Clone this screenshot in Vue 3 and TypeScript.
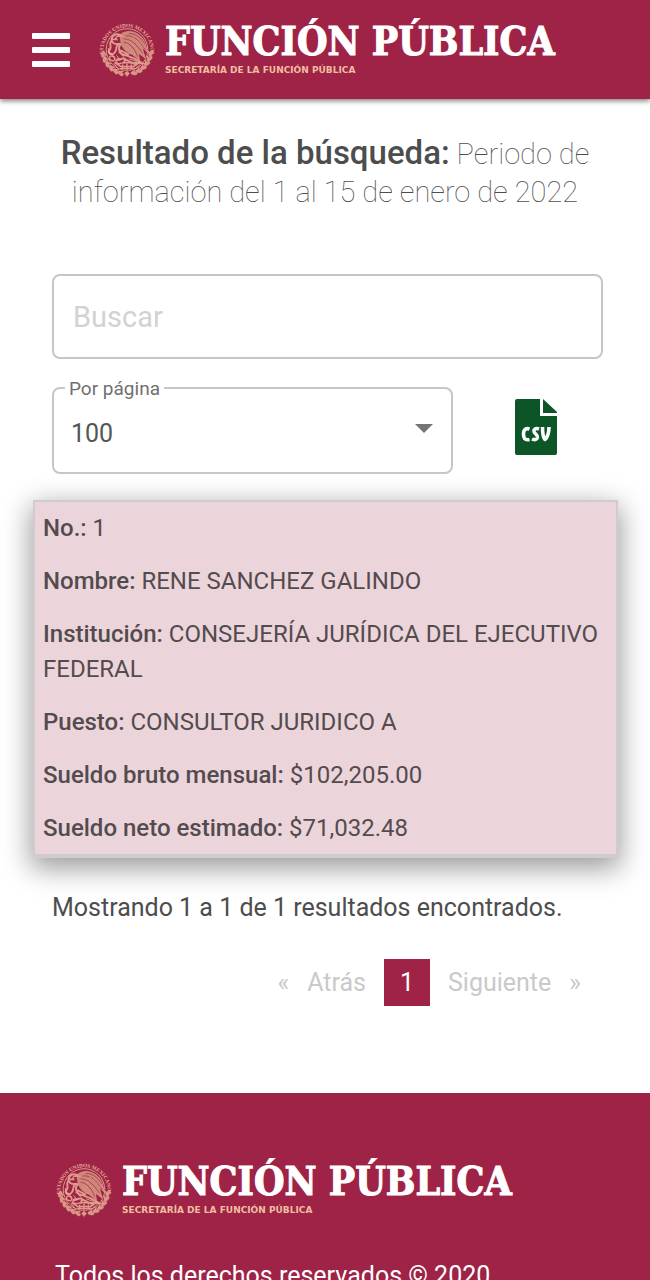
<script setup lang="ts">
import { computed, defineComponent, h, ref } from 'vue'

interface Field {
  label: string
  value: string
}

const query = ref('')
const perPage = ref(100)
const pageSizes: number[] = [10, 25, 50, 100]

const record: Field[] = [
  { label: 'No.:', value: '1' },
  { label: 'Nombre:', value: 'RENE SANCHEZ GALINDO' },
  { label: 'Institución:', value: 'CONSEJERÍA JURÍDICA DEL EJECUTIVO FEDERAL' },
  { label: 'Puesto:', value: 'CONSULTOR JURIDICO A' },
  { label: 'Sueldo bruto mensual:', value: '$102,205.00' },
  { label: 'Sueldo neto estimado:', value: '$71,032.48' },
]

const records = ref<Field[][]>([record])
const summary = computed(
  () => `Mostrando 1 a ${records.value.length} de ${records.value.length} resultados encontrados.`,
)

// Laurel leaves along the lower half of the seal, in degrees from the right.
const leaves: number[] = [9, 22, 35, 48, 61, 74, 106, 119, 132, 145, 158, 171]

const Seal = defineComponent({
  props: { id: { type: String, required: true } },
  setup(props) {
    return () =>
      h('svg', { viewBox: '0 0 120 120', width: 58, height: 58, fill: 'none', stroke: '#dd9c8b', 'aria-hidden': 'true' }, [
        h('path', { id: props.id, d: 'M12 72 A49 49 0 1 1 108 72', stroke: 'none' }),
        h('text', { fill: '#e6ad98', stroke: 'none', 'font-size': 11, 'font-weight': 700, 'font-family': 'Liberation Serif, serif' }, [
          h('textPath', { href: `#${props.id}`, startOffset: '50%', 'text-anchor': 'middle' }, 'ESTADOS UNIDOS MEXICANOS'),
        ]),
        h('circle', { cx: 60, cy: 59, r: 43, 'stroke-width': 2 }),
        ...leaves.map((a) =>
          h('g', { transform: `rotate(${a} 60 60) translate(112 60)` }, [
            h('ellipse', { cx: -2, cy: 0, rx: 3.5, ry: 6.5, fill: '#d99483', 'stroke-width': 1, transform: 'rotate(25)' }),
            h('path', { d: 'M-8 -5 L-3 4', 'stroke-width': 3 }),
          ]),
        ),
        h('path', { d: 'M55 108 l5 7 5 -7 -5 -4z', fill: '#dd9c8b' }),
        // wing
        h('path', {
          d: 'M45 29 C61 15 88 22 98 46 L102 64 L91 55 L98 77 L83 66 L86 82 L71 69 C60 66 51 57 48 46z',
          fill: '#cf8578', 'stroke-width': 1.5,
        }),
        h('path', {
          d: 'M57 31 C73 29 85 39 98 60 M53 37 C69 37 80 49 92 67 M53 44 C66 45 77 58 82 75 M64 26 C80 25 89 37 98 48',
          stroke: '#9f2346', 'stroke-width': 1.4,
        }),
        h('path', {
          d: 'M61 39 L96 72 M60 48 L85 78 M70 31 L99 58 M59 55 L74 72',
          stroke: '#f1c5ae', 'stroke-width': 1, 'stroke-dasharray': '2 2',
        }),
        // head, beak and serpent
        h('path', {
          d: 'M46 47 C33 50 27 43 28 37 C30 28 41 24 48 31 C40 30 36 34 38 38 L29 38 M29 39 C20 48 31 54 23 61 C19 66 28 72 34 66 C42 58 34 53 42 49',
          'stroke-width': 4,
        }),
        h('circle', { cx: 40, cy: 34, r: 1.5, fill: '#9f2346', stroke: 'none' }),
        // breast, claws and tail
        h('path', {
          d: 'M48 47 C39 56 44 68 55 70 L73 77 L91 87 L72 87 L52 77 L38 82 M56 76 L54 88 M46 60 L64 70 M43 63 L54 73',
          'stroke-width': 4,
        }),
        // nopal, stone and lake
        h('path', {
          d: 'M30 73 C23 70 21 80 29 82 C36 83 37 75 30 73 M43 78 C35 78 35 89 44 88 M39 91 C50 84 70 84 80 92 M34 86 L47 94 L74 94 L88 84 M45 98 H76 M51 90 V98 M60 88 V101 M69 90 V98',
          'stroke-width': 3,
        }),
        h('path', {
          d: 'M26 65 L34 75 M21 56 L25 70 M38 71 L47 81 M64 78 L80 84 M33 88 L41 98 M77 99 L86 91',
          stroke: '#f1c5ae', 'stroke-width': 1.5,
        }),
      ])
  },
})
</script>

<template>
  <div class="page">
    <header class="topbar">
      <button class="menu" type="button" aria-label="Menú">
        <svg viewBox="0 0 38 34" width="38" height="34" fill="#fff" aria-hidden="true">
          <rect width="38" height="6" rx="1" />
          <rect y="14" width="38" height="6" rx="1" />
          <rect y="28" width="38" height="6" rx="1" />
        </svg>
      </button>
      <a class="brand" href="#">
        <Seal id="seal-top" />
        <span class="wordmark">
          <span class="name">FUNCIÓN PÚBLICA</span>
          <span class="sub">SECRETARÍA DE LA FUNCIÓN PÚBLICA</span>
        </span>
      </a>
    </header>

    <main class="content">
      <h1 class="title"><strong>Resultado de la búsqueda:</strong> Periodo de información del 1 al 15 de enero de 2022</h1>

      <div class="filters">
        <input v-model="query" class="search" type="text" placeholder="Buscar" aria-label="Buscar" />
        <div class="row">
          <div class="per-page">
            <label for="per-page">Por página</label>
            <select id="per-page" v-model="perPage">
              <option v-for="n in pageSizes" :key="n" :value="n">{{ n }}</option>
            </select>
            <svg class="arrow" viewBox="0 0 18 9" width="18" height="9" aria-hidden="true"><path d="M0 0H18L9 9z" fill="#757575" /></svg>
          </div>
          <div class="export">
            <button class="csv" type="button" aria-label="Descargar CSV">
              <svg viewBox="0 0 42 56" width="42" height="56" aria-hidden="true">
                <path d="M2 0H25V17H42V54a2 2 0 0 1-2 2H2a2 2 0 0 1-2-2V2a2 2 0 0 1 2-2z" fill="#0b5527" />
                <path d="M28 0L42 13V14H28z" fill="#0b5527" />
                <g fill="none" stroke="#fff" stroke-width="3.600" stroke-linejoin="round">
                  <path d="M14.500 30C9.500 28.500 8.500 32 8.500 35C8.500 39 9.500 41.500 14.500 40.500" />
                  <path d="M24 30C20 28.500 18.500 31 19 32.500C19.500 35 23 35.500 22.500 38.500C22 41 19 41 17 40" />
                  <path d="M27.500 28C27.500 33 28.500 39 30 40.500C32.500 39 34 33 34 28" />
                </g>
              </svg>
            </button>
          </div>
        </div>
      </div>

      <article v-for="(fields, i) in records" :key="i" class="card">
        <p v-for="f in fields" :key="f.label"><strong>{{ f.label }}</strong> {{ f.value }}</p>
      </article>

      <p class="summary">{{ summary }}</p>

      <nav class="pager" aria-label="Paginación">
        <button type="button" disabled aria-label="Primera">«</button>
        <button type="button" disabled>Atrás</button>
        <button type="button" class="current" aria-current="page">1</button>
        <button type="button" disabled>Siguiente</button>
        <button type="button" disabled aria-label="Última">»</button>
      </nav>
    </main>

    <footer class="footer">
      <a class="brand" href="#">
        <Seal id="seal-bottom" />
        <span class="wordmark">
          <span class="name">FUNCIÓN PÚBLICA</span>
          <span class="sub">SECRETARÍA DE LA FUNCIÓN PÚBLICA</span>
        </span>
      </a>
      <p>Todos los derechos reservados © 2020</p>
    </footer>
  </div>
</template>

<style>
body {
  margin: 0;
  background: #fff;
}
</style>

<style scoped>
.page {
  height: 100vh;
  overflow: hidden;
  font-family: Roboto, 'Liberation Sans', sans-serif;
  color: #4d4d4d;
}

.page * {
  box-sizing: border-box;
}

button {
  margin: 0;
  padding: 0;
  border: 0;
  background: none;
  font: inherit;
  color: inherit;
}

.topbar {
  display: flex;
  align-items: center;
  gap: 28px;
  height: 99px;
  padding: 0 32px;
  background: #9f2346;
  box-shadow: 0 2px 5px rgba(0, 0, 0, 0.5);
}

.menu {
  display: flex;
}

.brand {
  display: flex;
  align-items: center;
  gap: 9px;
  color: #fff;
  text-decoration: none;
}

.brand svg {
  flex: none;
}

.wordmark {
  display: flex;
  flex-direction: column;
  padding-bottom: 4px;
  white-space: nowrap;
}

.name {
  font: 700 39px/44px 'DejaVu Serif Condensed', 'DejaVu Serif', serif;
  -webkit-text-stroke: 1px #fff;
}

.sub {
  font: 700 9px/14px 'DejaVu Sans', sans-serif;
  color: #f0bfa0;
}

.title {
  margin: 0;
  padding: 35px 52px 0;
  text-align: center;
  font-size: 29px;
  font-weight: 100;
  line-height: 38px;
}

.title strong {
  font-size: 33px;
  font-weight: 500;
}

.filters {
  padding: 63px 47px 0 52px;
}

.search {
  display: block;
  width: 100%;
  height: 85px;
  padding: 0 19px;
  border: 2px solid #c6c6c6;
  border-radius: 8px;
  font: 400 29px Roboto, sans-serif;
  color: #4d4d4d;
}

.search::placeholder {
  color: #d2d2d2;
  opacity: 1;
}

.row {
  display: grid;
  grid-template-columns: 8fr 3fr;
  margin-top: 28px;
}

.per-page {
  position: relative;
}

.per-page label {
  position: absolute;
  top: -10px;
  left: 13px;
  padding: 0 4px;
  background: #fff;
  font-size: 19px;
  line-height: 24px;
  color: #707070;
}

.per-page select {
  display: block;
  appearance: none;
  width: 100%;
  height: 87px;
  padding: 6px 19px 0 17px;
  border: 2px solid #c6c6c6;
  border-radius: 8px;
  background: #fff;
  font: 400 25px Roboto, sans-serif;
  color: #555;
}

.arrow {
  position: absolute;
  top: 37px;
  right: 20px;
  pointer-events: none;
}

.export {
  display: flex;
  justify-content: center;
  align-items: flex-start;
  padding: 12px 0 0 16px;
}

.csv {
  display: flex;
}

.card {
  display: flex;
  flex-direction: column;
  gap: 18px;
  margin: 26px 32px 0 33px;
  padding: 9px 8px 8px;
  border: 2px solid #d0cccd;
  border-bottom-width: 4px;
  background: #ebd5db;
  box-shadow: 0 8px 26px 2px rgba(0, 0, 0, 0.4);
  font-size: 24px;
  line-height: 35px;
  color: #544b4e;
}

.card p {
  margin: 0;
}

.card strong {
  font-weight: 500;
}

.summary {
  margin: 31px 52px 0;
  font-size: 25px;
  line-height: 38px;
}

.pager {
  display: flex;
  justify-content: flex-end;
  margin: 32px 60px 0;
  font-size: 25px;
  line-height: 47px;
}

.pager button {
  padding: 0 9px;
  color: #c9c9c9;
}

.pager .current {
  margin: 0 9px;
  padding: 0 16px;
  background: #9f2346;
  color: #fff;
}

.footer {
  margin-top: 87px;
  padding: 66px 55px 60px;
  background: #9f2346;
  color: #fff;
}

.footer p {
  margin: 36px 0 0;
  font-size: 25px;
  line-height: 38px;
}
</style>
